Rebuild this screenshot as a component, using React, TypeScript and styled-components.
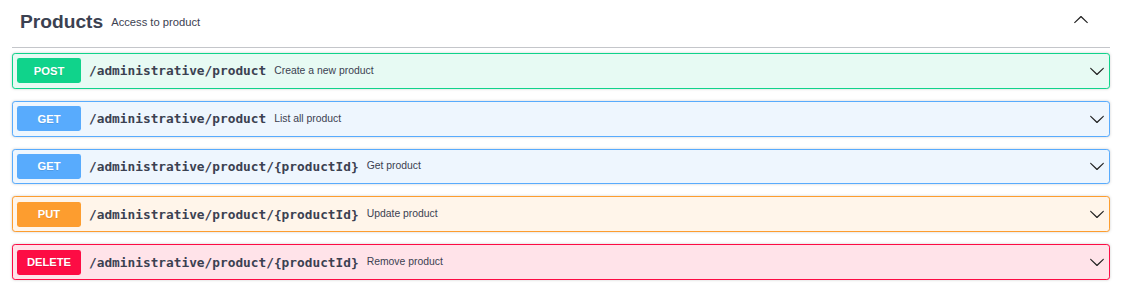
import React from "react";
import styled, { createGlobalStyle } from "styled-components";

const GlobalStyle = createGlobalStyle`
  html, body { margin: 0; padding: 0; background: #ffffff; }
  body { font-family: "Liberation Sans", Arial, sans-serif; }
`;

type Method = "post" | "get" | "put" | "delete";

const palette: Record<Method, { main: string; bg: string }> = {
  post: { main: "#10d38b", bg: "#e7faf3" },
  get: { main: "#58abfd", bg: "#eef6fe" },
  put: { main: "#fd9d2f", bg: "#fff5ea" },
  delete: { main: "#fd0c44", bg: "#ffe3e9" },
};

const Page = styled.div`
  padding: 0 11px 0 12px;
  color: #3b4151;
`;

const TagHeader = styled.div`
  display: flex;
  align-items: flex-start;
  padding: 11px 21px 14px 8px;
  border-bottom: 1px solid rgba(59, 65, 81, 0.3);
  margin-bottom: 5px;
`;

const TagTitle = styled.h3`
  flex: 1;
  display: flex;
  align-items: center;
  margin: 0;
  font-family: "Liberation Sans", Arial, sans-serif;
  font-size: 19.2px;
  font-weight: 700;
  line-height: normal;
  color: #3b4151;
`;

const TagDescription = styled.small`
  padding: 0 8px;
  font-size: 11.2px;
  font-weight: 400;
  font-family: "Liberation Sans", Arial, sans-serif;
  color: #3b4151;
`;

const ArrowBox = styled.span<{ $up?: boolean }>`
  display: flex;
  width: 16px;
  height: 16px;
  flex: none;
  margin-top: ${(p) => (p.$up ? "1px" : "0")};
  transform: ${(p) => (p.$up ? "rotate(180deg)" : "none")};
  svg { display: block; }
`;

const Block = styled.div<{ $m: Method }>`
  border: 1px solid ${(p) => palette[p.$m].main};
  background: ${(p) => palette[p.$m].bg};
  border-radius: 3.2px;
  box-shadow: 0 0 3px rgba(0, 0, 0, 0.19);
  margin-bottom: 12px;
`;

const Summary = styled.div`
  display: flex;
  align-items: center;
  padding: 4px;
  min-height: 25.8px;
`;

const MethodBadge = styled.span<{ $m: Method }>`
  display: flex;
  align-items: center;
  justify-content: center;
  min-width: 64px;
  height: 25px;
  border-radius: 2.4px;
  background: ${(p) => palette[p.$m].main};
  color: #ffffff;
  font-family: "Liberation Sans", Arial, sans-serif;
  font-size: 11.2px;
  font-weight: 700;
  text-shadow: 0 1px 0 rgba(0, 0, 0, 0.1);
`;

const Path = styled.span`
  padding: 0 8px;
  font-family: "DejaVu Sans Mono", monospace;
  font-size: 12.8px;
  font-weight: 700;
  color: #3b4151;
`;

const Description = styled.span`
  flex: 1 1 auto;
  font-family: "Liberation Sans", Arial, sans-serif;
  font-size: 10.4px;
  color: #3b4151;
  padding-bottom: 1px;
`;

const Arrow = ({ up }: { up?: boolean }) => (
  <ArrowBox $up={up}>
    <svg width="16" height="16" viewBox="0 0 20 20" fill="#222222">
      <path d="M17.418 6.109c.272-.268.709-.268.979 0s.271.701 0 .969l-7.908 7.83c-.27.268-.707.268-.979 0l-7.908-7.83c-.27-.268-.27-.701 0-.969s.709-.268.979 0L10 13.25z" />
    </svg>
  </ArrowBox>
);

const ops: { method: Method; path: string; desc: string }[] = [
  { method: "post", path: "/administrative/product", desc: "Create a new product" },
  { method: "get", path: "/administrative/product", desc: "List all product" },
  { method: "get", path: "/administrative/product/{productId}", desc: "Get product" },
  { method: "put", path: "/administrative/product/{productId}", desc: "Update product" },
  { method: "delete", path: "/administrative/product/{productId}", desc: "Remove product" },
];

export default function App() {
  return (
    <>
      <GlobalStyle />
      <Page>
        <TagHeader>
          <TagTitle>
            <span>Products</span>
            <TagDescription>Access to product</TagDescription>
          </TagTitle>
          <Arrow up />
        </TagHeader>
        {ops.map((op, i) => (
          <Block key={i} $m={op.method}>
            <Summary>
              <MethodBadge $m={op.method}>{op.method.toUpperCase()}</MethodBadge>
              <Path>{op.path}</Path>
              <Description>{op.desc}</Description>
              <Arrow />
            </Summary>
          </Block>
        ))}
      </Page>
    </>
  );
}
